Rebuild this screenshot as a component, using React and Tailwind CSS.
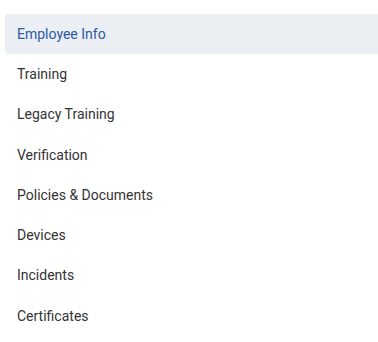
const items = [
  'Employee Info',
  'Training',
  'Legacy Training',
  'Verification',
  'Policies & Documents',
  'Devices',
  'Incidents',
  'Certificates',
];

export default function App() {
  const active = 'Employee Info';
  return (
    <div className="min-h-screen bg-white pt-[14px] pl-[5px] font-['Roboto',sans-serif]">
      <nav className="flex flex-col">
        {items.map((item) => (
          <a
            key={item}
            href="#"
            className={
              item === active
                ? 'flex h-[40.3px] items-center rounded-l-[4px] bg-[#ebeef3] pl-3 text-[14px] text-[#2d5aa0]'
                : 'flex h-[40.3px] items-center pl-3 text-[14px] text-[#333333]'
            }
          >
            {item}
          </a>
        ))}
      </nav>
    </div>
  );
}
